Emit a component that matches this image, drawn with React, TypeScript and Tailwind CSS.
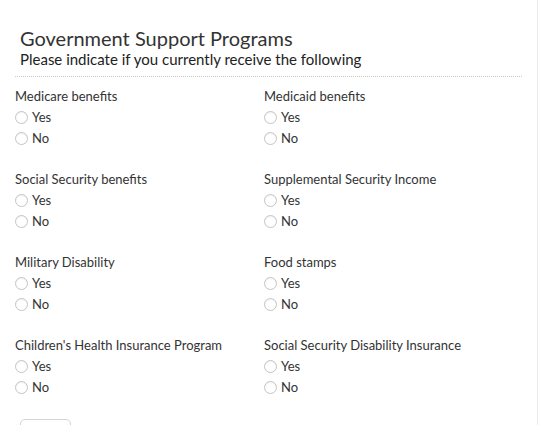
const groups: string[][] = [
  ["Medicare benefits", "Medicaid benefits"],
  ["Social Security benefits", "Supplemental Security Income"],
  ["Military Disability", "Food stamps"],
  ["Children's Health Insurance Program", "Social Security Disability Insurance"],
];

function Radio({ label }: { label: string }) {
  return (
    <label className="flex h-[21px] items-center gap-[4px]">
      <span className="h-[13px] w-[13px] rounded-full border border-[#c4c4c4] bg-white shadow-[inset_0_1px_1px_rgba(0,0,0,0.06)]" />
      <span className="text-[13px] text-[#333]">{label}</span>
    </label>
  );
}

function Question({ title }: { title: string }) {
  return (
    <div className="h-[83px]">
      <p className="h-[21px] text-[13px] leading-[20px] text-[#333]">{title}</p>
      <Radio label="Yes" />
      <Radio label="No" />
    </div>
  );
}

export default function App() {
  return (
    <div className="h-[425px] w-[539px] overflow-hidden bg-white font-['Lato',sans-serif]">
      <div className="h-full w-[538px] border-r border-[#ececec] pl-[15px] pt-[26px]">
        <div className="pl-[5px]">
          <h1 className="text-[20px] leading-[24px] text-[#333]">Government Support Programs</h1>
          <p className="text-[15px] leading-[18px] text-[#222]">Please indicate if you currently receive the following</p>
        </div>
        <div className="mt-[8px] mb-[9px] w-[507px] border-t border-dotted border-[#c8c8c8]" />
        <div className="grid grid-cols-[249px_1fr]">
          {groups.map((pair) =>
            pair.map((t) => <Question key={t} title={t} />)
          )}
        </div>
        <div className="ml-[5px] mt-[1px] h-[20px] w-[51px] rounded-[5px] border border-[#d4d4d4]" />
      </div>
    </div>
  );
}
